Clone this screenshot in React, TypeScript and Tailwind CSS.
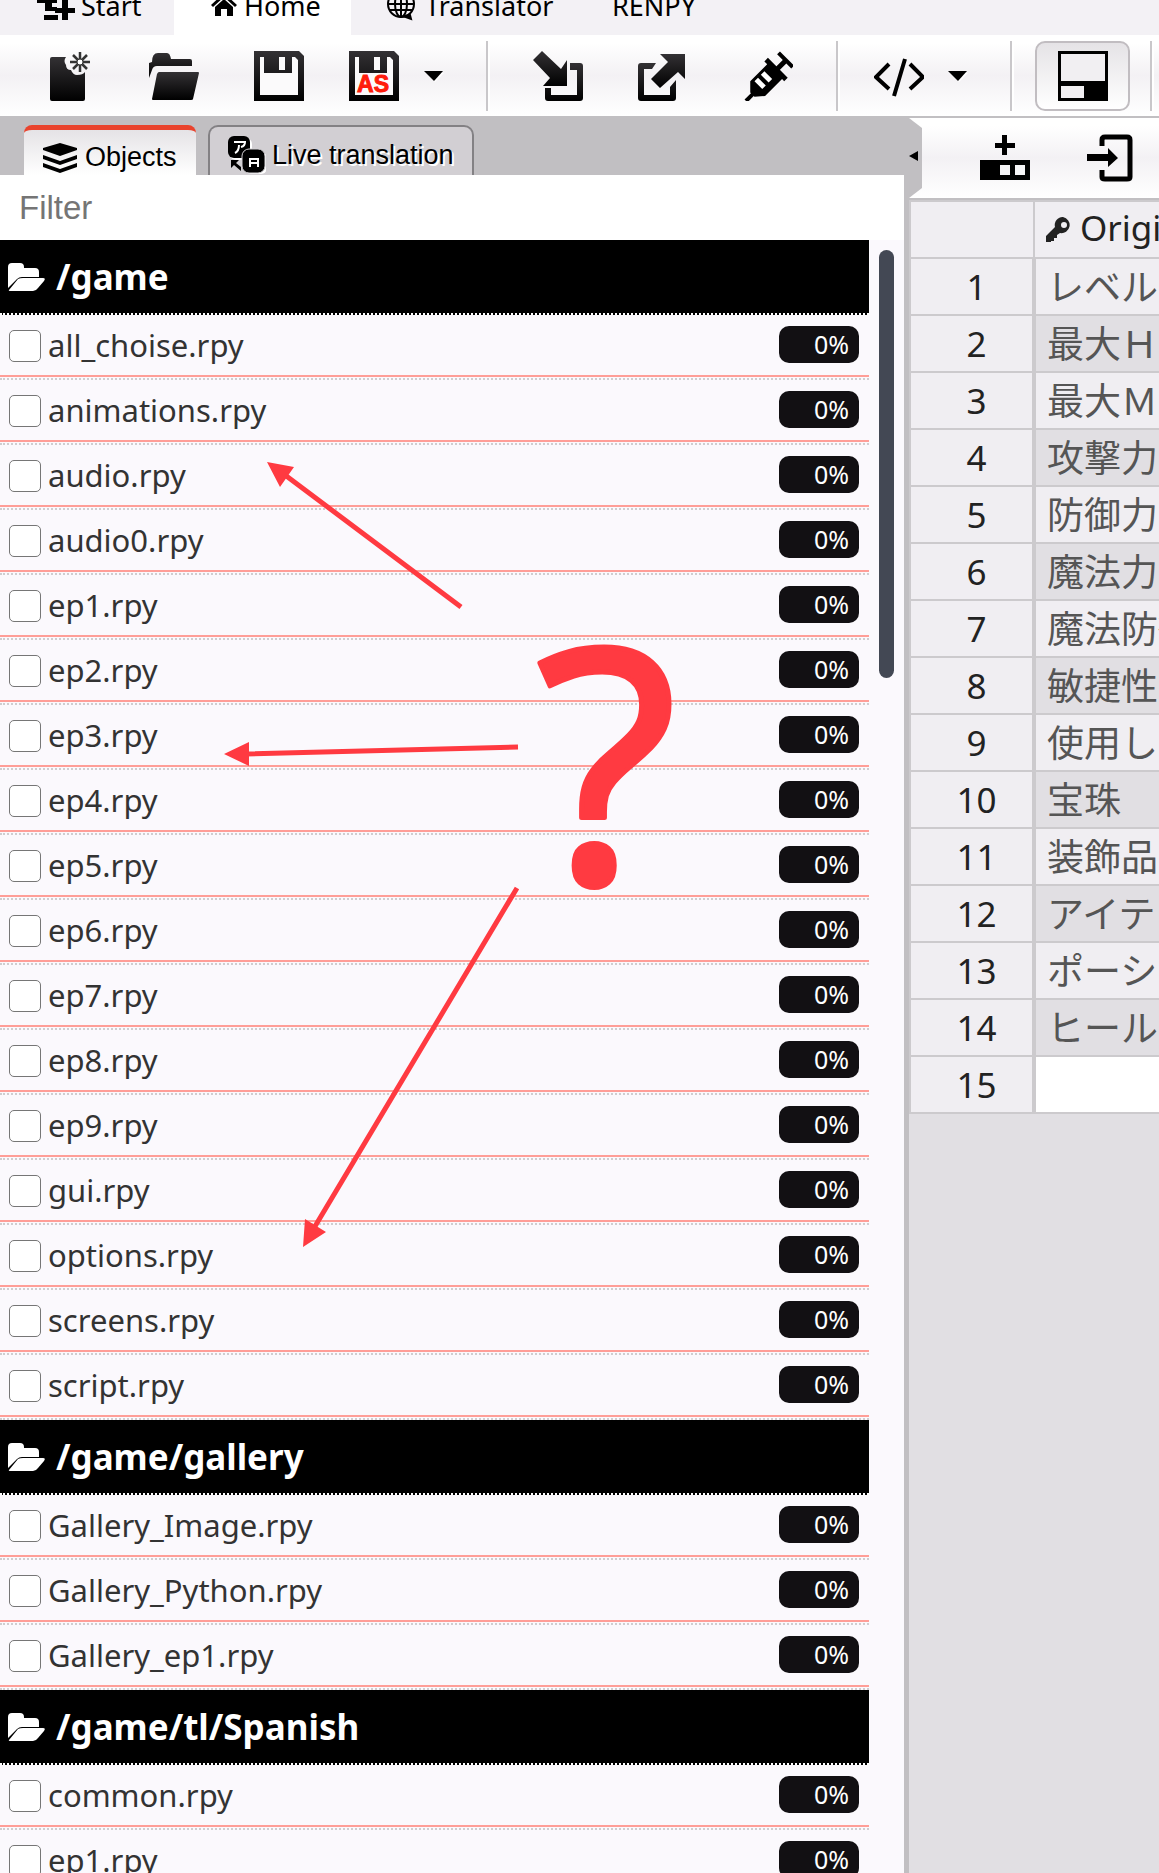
import React, { useState } from 'react';

const groups = [
  {
    path: '/game',
    files: [
      'all_choise.rpy', 'animations.rpy', 'audio.rpy', 'audio0.rpy', 'ep1.rpy', 'ep2.rpy',
      'ep3.rpy', 'ep4.rpy', 'ep5.rpy', 'ep6.rpy', 'ep7.rpy', 'ep8.rpy', 'ep9.rpy',
      'gui.rpy', 'options.rpy', 'screens.rpy', 'script.rpy',
    ],
  },
  { path: '/game/gallery', files: ['Gallery_Image.rpy', 'Gallery_Python.rpy', 'Gallery_ep1.rpy'] },
  { path: '/game/tl/Spanish', files: ['common.rpy', 'ep1.rpy'] },
];

const originals = [
  'レベル', '最大Ｈ', '最大Ｍ', '攻撃力', '防御力', '魔法力', '魔法防御', '敏捷性',
  '使用し', '宝珠', '装飾品', 'アイテ', 'ポーシ', 'ヒール', '',
];

function Separator() {
  return <div className="w-1 h-[70px] shrink-0 bg-white border-l-2 border-[#c9c7ca]" />;
}

function ToolButton({ label, className = 'w-[105px]', children }: { label: string; className?: string; children: React.ReactNode }) {
  return (
    <button aria-label={label} className={`h-[70px] shrink-0 flex items-center justify-center ${className}`}>
      {children}
    </button>
  );
}

function Icon({ children }: { children: React.ReactNode }) {
  return (
    <svg viewBox="0 0 50 50" className="w-[50px] h-[50px] shrink-0">
      {children}
    </svg>
  );
}

function Caret() {
  return (
    <svg viewBox="0 0 20 12" className="w-5 h-3">
      <path d="M2 3h18l-9 9z" fill="#fff" />
      <path d="M0 1h19l-9 10z" fill="#000" />
    </svg>
  );
}

function Floppy({ as = false }: { as?: boolean }) {
  return (
    <Icon>
      <path d="M0 0h45l5 5v45H0z" fill="url(#ink)" />
      <path d="M6 6h4v16h28V6h3l3 3v35H6z" fill="#fbfafb" />
      <path d="M25 6h6v13h-6z" fill="#fbfafb" />
      {as && (
        <text x="24" y="41" textAnchor="middle" fontSize="23" fontWeight="bold" fill="#ff1c0c" stroke="#ff1c0c" fontFamily="Liberation Sans, sans-serif">
          AS
        </text>
      )}
    </Icon>
  );
}

function FolderIcon() {
  return (
    <svg viewBox="0 0 38 28" className="w-[38px] h-7 shrink-0">
      <path d="M0 4q0-4 4-4h8q4 0 4 4v1h11q4 0 4 4v5H14q-3 0-5 2L0 25z" fill="#fff" />
      <path d="M1 27l9-11q2-1 5-1h20q3 0 1 3l-6 7q-2 3-5 3H3q-3 0-2-1z" fill="#fff" />
    </svg>
  );
}

function TopTabs() {
  const tab = 'h-full shrink-0 flex items-end pb-[11px] leading-9';
  return (
    <nav className="h-[35px] shrink-0 flex overflow-hidden bg-[#f3f1f5] text-[27px]">
      <button className={`${tab} gap-[6px] w-[174px] pl-[37px]`}>
        <svg viewBox="0 0 38 38" className="w-[38px] h-[38px] shrink-0">
          <path d="M0 12h20v5h-5v4h5v4H8v-8H0zM25 5h6v17h7v5h-7v7h-6v-7h-7v-5h7zM7 29h14v5H7z" />
        </svg>
        Start
      </button>
      <button className={`${tab} gap-[7px] w-[177px] pl-[37px] bg-white`}>
        <svg viewBox="0 0 26 26" className="w-[26px] h-9 shrink-0">
          <path d="M13 0l13 12-2 2L13 4 2 14l-2-2zM19 1h4v6l-4-4zM4 14l9-8 9 8v9h-6v-7h-6v7H4z" />
        </svg>
        Home
      </button>
      <button className={`${tab} gap-[9px] w-[216px] pl-[35px]`}>
        <svg viewBox="0 0 30 32" className="w-[30px] h-9 shrink-0" fill="none" stroke="#000" strokeWidth="2">
          <circle cx="15" cy="14" r="13" />
          <ellipse cx="15" cy="14" rx="6" ry="13" />
          <path d="M15 1v26M2 14h26M4 8h22M4 20h22" />
          <path d="M17 26l8 3-1-4z" fill="#000" />
        </svg>
        Translator
      </button>
      <button className={`${tab} pl-[45px]`}>RENPY</button>
    </nav>
  );
}

function Toolbar() {
  return (
    <div className="h-[83px] shrink-0 flex items-center pl-4 overflow-hidden border-b-2 border-[#c1bfc2] bg-linear-to-b from-white from-10% via-[#f3f1f4] via-50% to-white">
      <ToolButton label="New">
        <Icon>
          <path d="M8 6h14q-3 4 0 8 0 5 5 5 2 5 6 5 6 0 8-3v27q0 2-2 2H8q-2 0-2-2V8q0-2 2-2z" fill="url(#ink)" />
          <path d="M36 1v20M26 11h20M29 4l14 14M43 4L29 18" stroke="#333" strokeWidth="2.5" />
          <circle cx="36" cy="11" r="3" fill="#fff" stroke="#333" strokeWidth="1" />
        </Icon>
      </ToolButton>
      <ToolButton label="Open">
        <Icon>
          <path d="M0 27V12l3-1q0-9 6-9h9q3 0 4 6h19q2 0 2 2v5H8q-4 0-5 4z" fill="url(#ink)" />
          <path d="M10 21h39q1 0 1 1l-6 26q0 1-2 1H4q-1 0-1-1l5-25q1-2 2-2z" fill="url(#ink)" />
        </Icon>
      </ToolButton>
      <ToolButton label="Save"><Floppy /></ToolButton>
      <ToolButton label="Save as" className="w-[85px]"><Floppy as /></ToolButton>
      <ToolButton label="Save options" className="w-[35px] mr-[35px]"><Caret /></ToolButton>
      <Separator />
      <ToolButton label="Import" className="w-[105px] ml-[15px]">
        <Icon>
          <path d="M0 9l9-9 19 18 6-9v26H10l7-8z" fill="url(#ink)" />
          <path d="M37 12h10q3 0 3 3v32q0 3-3 3H15q-3 0-3-3V37h6v7h26V19h-7z" fill="url(#ink)" />
        </Icon>
      </ToolButton>
      <ToolButton label="Export">
        <Icon>
          <path d="M22 3h25v25l-7-7-18 16-9-9 17-17z" fill="url(#ink)" />
          <path d="M3 12h15l-4 6H6v26h26v-8l6-7v18q0 3-3 3H3q-3 0-3-3V15q0-3 3-3z" fill="url(#ink)" />
        </Icon>
      </ToolButton>
      <ToolButton label="Inject" className="w-[105px] mr-4">
        <Icon>
          {/* needle, barrel, flange and plunger along one diagonal */}
          <g transform="translate(3 50) rotate(-45)">
            <path d="M0-2h10v4H0z" />
            <path d="M9-3l8-8h24v-4h5v28h-5v-3H17L9 3z" />
            <path d="M45-3h10v-8h4v20h-4V2H45z" />
            <path d="M20-8h5V3h-5zM29-8h5V3h-5z" fill="#fff" />
          </g>
        </Icon>
      </ToolButton>
      <Separator />
      <ToolButton label="Code" className="w-[90px] ml-[14px]">
        <Icon>
          <path d="M15 13L2 26l13 12M36 13l13 13-13 12M31 8L20 45" fill="none" stroke="#000" strokeWidth="4" />
        </Icon>
      </ToolButton>
      <ToolButton label="Code options" className="w-7 mr-[38px]"><Caret /></ToolButton>
      <Separator />
      <button aria-label="Toggle panel" aria-pressed className="w-[95px] h-[70px] ml-[21px] mr-5 shrink-0 flex items-center justify-center rounded-[10px] border-2 border-[#c1bdc1] bg-linear-to-b from-[#e5e3e6] to-white">
        <Icon>
          <path d="M0 0h50v50H0z" />
          <path d="M3 3h44v27H3zM3 35h23v12H3z" fill="#f1eff2" />
        </Icon>
      </button>
      <Separator />
    </div>
  );
}

function FileRow({ name }: { name: string }) {
  return (
    <li className="border-b-2 border-dotted border-[#cfcdd0] pb-px">
      <label className="h-[62px] flex items-start gap-[7px] pl-[9px] pr-[10px] border-b-2 border-[#ff9e98]">
        <input type="checkbox" className="appearance-none mt-[15px] w-8 h-8 shrink-0 rounded-[5px] border border-[#767676] bg-white checked:bg-[#434854]" />
        <span className="mt-[10px] flex-1 text-[31px] leading-10 text-[#333]">{name}</span>
        <span className="mt-[11px] w-20 h-[37px] rounded-[10px] bg-[#121013] pr-[10px] text-right text-[25px] leading-[36px] text-white">0%</span>
      </label>
    </li>
  );
}

function ObjectsPanel() {
  const [filter, setFilter] = useState('');
  return (
    <section className="w-[78%] shrink-0 flex flex-col bg-[#fbf9fd]">
      <div className="h-[57px] shrink-0 flex items-end gap-3 pl-6 bg-[#c1bfc2] font-['Liberation_Sans',Arial,sans-serif] text-[27px]">
        <button className="w-[172px] h-[50px] flex items-center gap-2 pl-[19px] pt-[10px] rounded-t-[8px] border-t-[5px] border-[#e9432d] bg-linear-to-b from-[#e5e3e6] to-white">
          <svg viewBox="0 0 34 30" className="w-[34px] h-[30px] shrink-0">
            <path d="M17 0l17 5v2l-17 6L0 7V5zM0 12l17 6 17-6v4l-17 6-17-6zM0 20l17 6 17-6v4l-17 6-17-6z" />
          </svg>
          Objects
        </button>
        <button className="w-[266px] h-[50px] flex items-center gap-[6px] pl-[18px] pt-2 rounded-t-[10px] border-2 border-b-0 border-[#838184] bg-[#d2cfd3] [text-shadow:2px_2px_0_#fff]">
          <svg viewBox="0 0 38 38" className="w-[38px] h-[38px] shrink-0">
            <rect x="2" y="2" width="22" height="22" rx="6" fill="#fff" />
            <rect x="17" y="16" width="22" height="22" rx="6" fill="#fff" />
            <rect width="22" height="22" rx="6" />
            <path d="M6 6h11q0 4-4 5M11 9q0 6-4 8" fill="none" stroke="#fff" strokeWidth="2" />
            <rect x="14" y="13" width="23" height="24" rx="7" fill="#000" stroke="#d2cfd3" strokeWidth="1" />
            <path d="M22 31v-8h8v8M22 27h8" fill="none" stroke="#fff" strokeWidth="2" />
            <path d="M3 24h8l-3 3 5 4v4l-7-6-3 3z" />
          </svg>
          Live translation
        </button>
      </div>
      <input
        aria-label="Filter"
        placeholder="Filter"
        value={filter}
        onChange={(e) => setFilter(e.target.value)}
        className="h-[65px] shrink-0 w-full bg-white px-[19px] outline-none font-['Liberation_Sans',Arial,sans-serif] text-[33px] placeholder:text-[#757575]"
      />
      <div className="flex-1 min-h-0 flex overflow-hidden">
        <div className="flex-1">
          {groups.map((group) => (
            <div key={group.path}>
              <h2 className="h-[75px] flex items-center gap-[10px] pl-2 bg-black border-b-2 border-dotted border-white text-[35px] leading-[50px] font-bold text-white">
                <FolderIcon />
                {group.path}
              </h2>
              <ul>
                {group.files.filter((f) => f.includes(filter)).map((f) => (
                  <FileRow key={f} name={f} />
                ))}
              </ul>
            </div>
          ))}
        </div>
        <div className="w-[35px] shrink-0 pt-[10px] pl-[10px]">
          <div className="w-[15px] h-[428px] rounded-full bg-[#434854]" />
        </div>
      </div>
    </section>
  );
}

function GridPanel() {
  return (
    <section className="flex-1 min-w-0 flex flex-col overflow-hidden border-l-[5px] border-[#c1bfc2] bg-[#e1dfe3]">
      <div className="h-[82px] shrink-0 flex items-center overflow-hidden border-b-2 border-[#c1bfc2] bg-linear-to-b from-white from-10% via-[#f3f1f4] via-50% to-white">
        <button aria-label="Collapse" className="shrink-0 mr-[30px]">
          <svg viewBox="0 0 13 80" className="w-[13px] h-20">
            <path d="M0 0l13 10v60L0 80z" fill="#c1bfc2" />
            <path d="M0 38l9-5v10z" />
          </svg>
        </button>
        <ToolButton label="Add row">
          <Icon>
            <path d="M22 2h5v8h8v5h-8v7h-5v-7h-7v-5h7zM0 27h50v20H0z" />
            <path d="M20 32h10v10H20zM35 32h10v10H35z" fill="#f6f5f7" />
          </Icon>
        </ToolButton>
        <ToolButton label="Insert">
          <Icon>
            <path d="M17 13V7q0-3 3-3h22q3 0 3 3v37q0 2-3 2H20q-3 0-3-2v-7" fill="none" stroke="#000" strokeWidth="5" />
            <path d="M2 21h21v-6l10 10-10 9v-6H2z" />
          </Icon>
        </ToolButton>
      </div>
      <table className="w-[calc(100%+4px)] table-fixed border-collapse border-[#cccacd] text-[35px] text-[#222]">
        <thead>
          <tr className="h-[57px] bg-[#f0eef2]">
            <th className="w-[124px] border-2 border-[#cccacd]" aria-label="Row" />
            <th className="p-0 pl-[11px] border-2 border-[#cccacd] text-left font-normal">
              <div className="flex items-center gap-[9px] overflow-hidden pb-1 leading-[50px]">
                <svg viewBox="0 0 25 25" className="w-[25px] h-[25px] mt-1 shrink-0">
                  <path fillRule="evenodd" d="M17 0a8 8 0 1 1-3 16l-3 2v3H8v3H5v1H0v-6L9 10A8 8 0 0 1 17 0zm1 5a3 3 0 1 0 0 6 3 3 0 0 0 0-6z" fill="#222" />
                </svg>
                Original
              </div>
            </th>
          </tr>
        </thead>
        <tbody>
          {originals.map((text, i) => (
            <tr key={i} className="h-[57px]">
              <th className="p-0 pl-[10px] border-2 border-r-4 border-[#cccacd] bg-[#f0eef2] font-normal leading-[54px]">{i + 1}</th>
              <td
                className={`p-0 pl-[11px] pb-1 border-2 border-[#cccacd] overflow-hidden whitespace-nowrap text-[37px] leading-[50px] text-[#555] font-['Noto_Sans_CJK_JP',sans-serif] ${
                  text === '' ? 'bg-white' : i % 2 ? 'bg-[#e1dfe3]' : 'bg-[#f0eef2]'
                }`}
              >
                {text}
              </td>
            </tr>
          ))}
        </tbody>
      </table>
    </section>
  );
}

// hand-drawn notes on top of the file list
function Annotations() {
  return (
    <div className="absolute top-0 left-0 pointer-events-none text-[#ff3a41]">
      <svg viewBox="0 0 700 1300" className="w-[700px] h-[1300px]" fill="currentColor">
        <g stroke="currentColor" strokeWidth="5">
          <path d="M461 607L285 475M518 747L245 754M517 888L314 1228" />
        </g>
        <path d="M267 462l27 5-14 20zM224 754l25-12v24zM303 1247l2-28 21 13z" />
        <text x="536" y="883" fontSize="326" fontFamily="Noto Sans, sans-serif" stroke="currentColor" strokeWidth="5" strokeLinejoin="round">?</text>
      </svg>
    </div>
  );
}

export default function App() {
  return (
    <div className="relative h-screen flex flex-col overflow-hidden bg-white text-black font-['Noto_Sans',sans-serif]">
      <svg className="absolute w-0 h-0" aria-hidden="true">
        <linearGradient id="ink" x1="0" y1="0" x2="0" y2="1">
          <stop offset="0" stopColor="#333134" />
          <stop offset="1" stopColor="#000" />
        </linearGradient>
      </svg>
      <TopTabs />
      <Toolbar />
      <main className="flex-1 min-h-0 flex">
        <ObjectsPanel />
        <GridPanel />
      </main>
      <Annotations />
    </div>
  );
}
